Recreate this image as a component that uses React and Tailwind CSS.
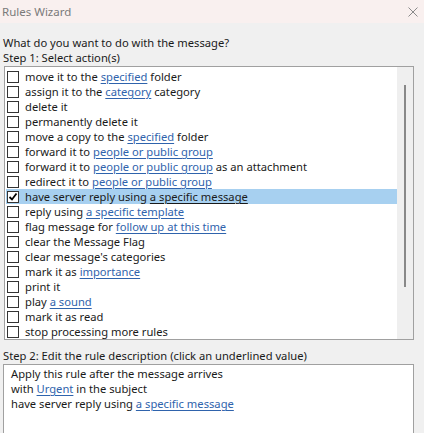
import React from "react";

const L = ({ children }) => (
  <span className="text-[#2f63ac] underline underline-offset-2 decoration-[#2f63ac]">{children}</span>
);

const rows = [
  ["move it to the ", <L key="a">specified</L>, " folder"],
  ["assign it to the ", <L key="a">category</L>, " category"],
  ["delete it"],
  ["permanently delete it"],
  ["move a copy to the ", <L key="a">specified</L>, " folder"],
  ["forward it to ", <L key="a">people or public group</L>],
  ["forward it to ", <L key="a">people or public group</L>, " as an attachment"],
  ["redirect it to ", <L key="a">people or public group</L>],
  "SEL",
  ["reply using ", <L key="a">a specific template</L>],
  ["flag message for ", <L key="a">follow up at this time</L>],
  ["clear the Message Flag"],
  ["clear message's categories"],
  ["mark it as ", <L key="a">importance</L>],
  ["print it"],
  ["play ", <L key="a">a sound</L>],
  ["mark it as read"],
  ["stop processing more rules"],
];

function Box({ checked }) {
  return (
    <div className="w-[12px] h-[12px] border border-[#333333] bg-white flex items-center justify-center shrink-0">
      {checked && (
        <svg width="10" height="10" viewBox="0 0 10 10">
          <path d="M1.5 5 L4 7.5 L8.5 1.5" fill="none" stroke="#000" strokeWidth="1.8" />
        </svg>
      )}
    </div>
  );
}

export default function App() {
  return (
    <div
      className="w-[424px] h-[433px] bg-[#f0f0f0] overflow-hidden text-[11.2px] text-[#1a1a1a] leading-[15px]"
      style={{ fontFamily: '"Noto Sans", "Open Sans", sans-serif' }}
    >
      <div className="h-[23px] bg-[#f9f0ef] flex items-center justify-between pl-[2px] pr-[6px]">
        <span className="text-[#7a7a7a] text-[11.5px]">Rules Wizard</span>
        <svg width="10" height="10" viewBox="0 0 10 10">
          <path d="M0.5 0.5 L9.5 9.5 M9.5 0.5 L0.5 9.5" stroke="#8a8a8a" strokeWidth="1" />
        </svg>
      </div>
      <div className="pt-[12px] pl-[3px]">
        <div>What do you want to do with the message?</div>
        <div>Step 1: Select action(s)</div>
      </div>
      <div className="ml-[4px] mt-[1px] w-[410px] h-[274px] border border-[#a0a0a0] bg-white flex pt-[2px] pl-[1px]">
        <div className="flex-1 flex flex-col">
          {rows.map((r, i) =>
            r === "SEL" ? (
              <div key={i} className="h-[15px] flex items-center bg-[#a7d0f0] pl-[1px] gap-[6px]">
                <Box checked />
                <span className="whitespace-nowrap">
                  have server reply using <span className="underline underline-offset-2">a specific message</span>
                </span>
              </div>
            ) : (
              <div key={i} className="h-[15px] flex items-center pl-[1px] gap-[6px]">
                <Box />
                <span className="whitespace-nowrap">{r}</span>
              </div>
            )
          )}
        </div>
        <div className="w-[16px] -mt-[2px] bg-[#efefef] flex justify-center pt-[18px]">
          <div className="w-[2px] h-[202px] bg-[#888888]" />
        </div>
      </div>
      <div className="pl-[3px] mt-[8px]">Step 2: Edit the rule description (click an underlined value)</div>
      <div className="ml-[3px] mt-[1px] w-[411px] h-[80px] border border-[#a0a0a0] bg-white pl-[7px] pt-[1px]">
        <div>Apply this rule after the message arrives</div>
        <div>
          with <L>Urgent</L> in the subject
        </div>
        <div>
          have server reply using <L>a specific message</L>
        </div>
      </div>
    </div>
  );
}
